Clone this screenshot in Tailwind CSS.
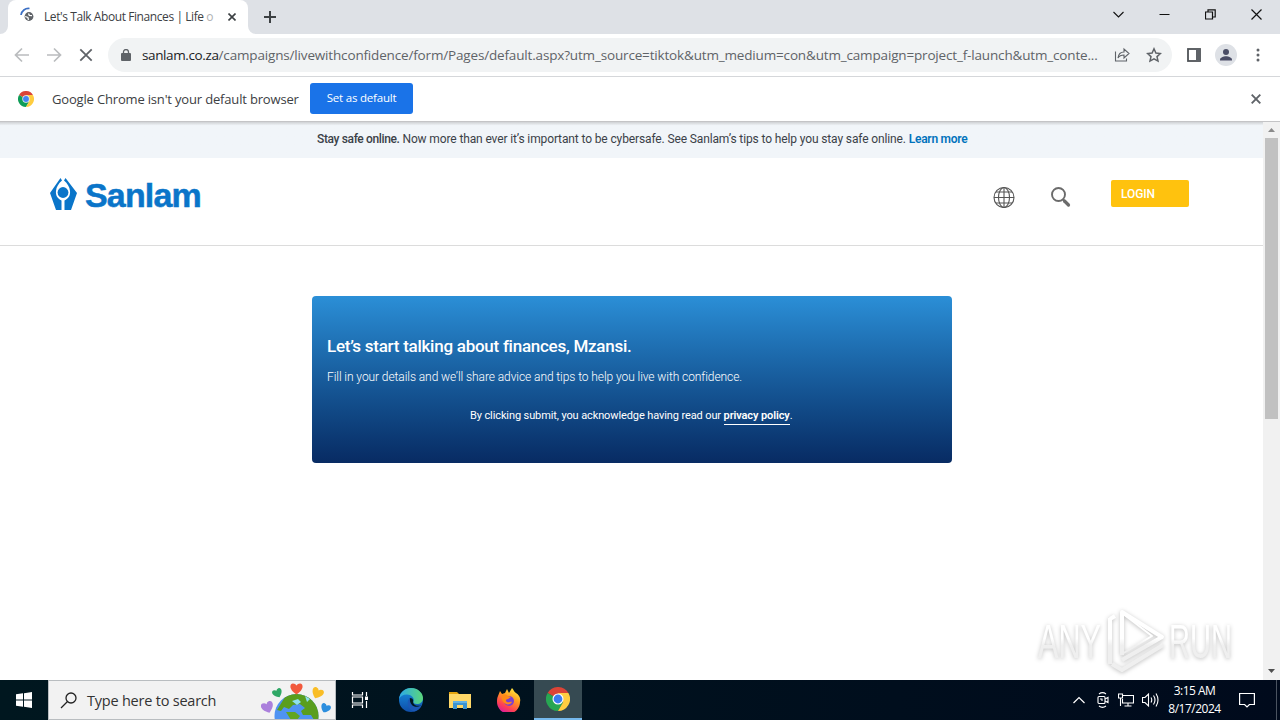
<!DOCTYPE html>
<html lang="en">
<head>
    <meta charset="UTF-8">
    <meta name="viewport" content="width=device-width, initial-scale=1.0">
    <title>Let's Talk About Finances | Life of Confidence</title>
    <script src="https://cdn.jsdelivr.net/npm/@tailwindcss/browser@4"></script>
</head>
<body class="w-[1280px] h-[720px] overflow-hidden flex flex-col bg-white font-['Open_Sans','Noto_Sans',sans-serif]">
    <!-- Tab strip -->
    <div class="h-[34px] shrink-0 bg-[#dee1e6] flex items-start pl-2">
        <div class="relative w-60 h-[34px] bg-white rounded-t-lg flex items-center pl-3 pr-2">
            <svg class="absolute -left-2 bottom-0 w-2 h-2" viewBox="0 0 8 8"><path d="M8 0v8H0a8 8 0 0 0 8-8z" fill="#fff"/></svg>
            <svg class="absolute -right-2 bottom-0 w-2 h-2" viewBox="0 0 8 8"><path d="M0 0v8h8a8 8 0 0 1-8-8z" fill="#fff"/></svg>
            <svg class="w-4 h-4 shrink-0 -mt-1" viewBox="0 0 16 16" fill="none">
                <path d="M1 8A7.500 7.500 0 0 1 9.500 1.500" stroke="#3b6fc4" stroke-width="1.700"/>
                <circle cx="9" cy="9.500" r="4.400" fill="#5f6368"/>
                <path d="M5.200 9.500l2.700 1 .6 2.300M8.500 6.500l.8 1.800 2.700.3" stroke="#fff" stroke-width="1.300"/>
            </svg>
            <div class="ml-2 w-[172px] whitespace-nowrap text-[12px] leading-4 text-[#3c4043] tracking-[-0.42px]">Let's Talk About Finances | Life <span class="text-[#b0b2b4]">o</span></div>
            <svg class="ml-3 w-2 h-2 shrink-0" viewBox="0 0 8 8"><path d="M.5.5l7 7M7.500.5l-7 7" stroke="#3c4043" stroke-width="1.600"/></svg>
        </div>
        <svg class="ml-4 mt-[11px] w-3 h-3" viewBox="0 0 12 12"><path d="M6 0v12M0 6h12" stroke="#3c4043" stroke-width="2"/></svg>
        <div class="ml-auto flex items-center h-7 text-[#111]">
            <svg class="w-[11px] h-[11px] mr-[35px]" viewBox="0 0 11 11" fill="none"><path d="M.5 3l5 5 5-5" stroke="currentColor" stroke-width="1.100"/></svg>
            <svg class="w-[11px] h-[11px] mr-[35px]" viewBox="0 0 11 11"><path d="M.5 5.500h10" stroke="currentColor"/></svg>
            <svg class="w-[11px] h-[11px] mr-[35px]" viewBox="0 0 11 11" fill="none"><path d="M.5 3h7v7h-7zM3 3V.8h7.200v7.200H7.500" stroke="currentColor" stroke-width="1.200"/></svg>
            <svg class="w-[11px] h-[11px] mr-[18px]" viewBox="0 0 11 11"><path d="M.5.5l10 10M10.500.5l-10 10" stroke="currentColor" stroke-width="1.200"/></svg>
        </div>
    </div>

    <!-- Toolbar -->
    <div class="h-[43px] shrink-0 bg-white border-b border-[#d5d7da] flex items-center pl-[14px]">
        <svg class="w-4 h-4" viewBox="0 0 16 16" fill="none"><path d="M15 8H2M8 1.500L1.500 8 8 14.500" stroke="#babcbe" stroke-width="1.700"/></svg>
        <svg class="ml-4 w-4 h-4" viewBox="0 0 16 16" fill="none"><path d="M1 8h13M8 1.500L14.500 8 8 14.500" stroke="#babcbe" stroke-width="1.700"/></svg>
        <svg class="ml-4 w-4 h-4" viewBox="0 0 16 16"><path d="M2.300 2.300l11.400 11.400M13.700 2.300L2.300 13.700" stroke="#5f6368" stroke-width="1.800"/></svg>
        <div class="ml-[14px] w-[1064px] h-[34px] rounded-full bg-[#f1f3f4] flex items-center pl-[13px]">
            <svg class="w-[10px] h-3 shrink-0" viewBox="0 0 10 12"><rect y="4" width="10" height="8" rx="1" fill="#5f6368"/><path d="M2.500 5V3a2.500 2.500 0 0 1 5 0v2" fill="none" stroke="#5f6368" stroke-width="1.300"/></svg>
            <div class="ml-[11px] w-[958px] whitespace-nowrap text-[13.5px] leading-5 text-[#5f6368] tracking-[-0.165px]"><span class="text-[#202124] tracking-[-0.38px]">sanlam.co.za</span>/campaigns/livewithconfidence/form/Pages/default.aspx?utm_source=tiktok&amp;utm_medium=con&amp;utm_campaign=project_f-launch&amp;utm_conte...</div>
            <svg class="ml-[14px] w-4 h-4 shrink-0" viewBox="0 0 16 16" fill="none" stroke="#5f6368" stroke-width="1.100"><path d="M1.500 4.500v9.500h11v-2.500"/><path d="M4 11c.5-4 2.500-6 6-6V2l5 4.500-5 4.500V8c-3 0-4.800 1-6 3z"/></svg>
            <svg class="ml-4 w-4 h-4 shrink-0" viewBox="0 0 16 16" fill="none" stroke="#5f6368" stroke-width="1.500"><path d="M8 1.800l1.900 4.200 4.500.5-3.400 3.100 1 4.500L8 11.800l-4 2.300 1-4.500L1.600 6.500 6.100 6z"/></svg>
        </div>
        <svg class="ml-[15px] w-[14px] h-[14px]" viewBox="0 0 14 14"><rect x="1" y="1" width="12" height="12" fill="none" stroke="#4f5357" stroke-width="1.800"/><path d="M9 1h4v12H9z" fill="#5f6368"/></svg>
        <svg class="ml-[14px] w-[22px] h-[22px]" viewBox="0 0 22 22"><circle cx="11" cy="11" r="11" fill="#dee1e6"/><circle cx="11" cy="8" r="3" fill="#4a4d66"/><path d="M5 16.500v-1c0-2 3.500-3.300 6-3.300s6 1.300 6 3.300v1z" fill="#4a4d66"/></svg>
        <svg class="ml-[19px] w-1 h-[14px]" viewBox="0 0 4 14" fill="#5f6368"><circle cx="2" cy="2" r="1.500"/><circle cx="2" cy="7" r="1.500"/><circle cx="2" cy="12" r="1.500"/></svg>
    </div>

    <!-- Default browser bar -->
    <div class="h-11 shrink-0 bg-white flex items-center pl-[18px] pr-[19px]">
        <svg class="w-4 h-4" viewBox="0 0 48 48">
            <path d="M24 24L3.200 12A24 24 0 0 1 44.800 12z" fill="#db4437"/>
            <path d="M24 24L3.200 12A24 24 0 0 0 24 48l10.400-18z" fill="#0f9d58"/>
            <path d="M24 12h20.800A24 24 0 0 1 24 48l10.400-18z" fill="#ffcd40"/>
            <circle cx="24" cy="24" r="11" fill="#f1f1f1"/><circle cx="24" cy="24" r="8.800" fill="#4285f4"/>
        </svg>
        <div class="ml-[18px] w-[258px] whitespace-nowrap text-[13px] leading-5 text-[#3c4043] tracking-[-0.17px]">Google Chrome isn't your default browser</div>
        <button class="w-[103px] h-[31px] -mt-0.5 rounded-[3px] bg-[#1a73e8] text-white text-[11.5px] tracking-[-0.2px]">Set as default</button>
        <svg class="ml-auto w-[10px] h-[10px]" viewBox="0 0 10 10"><path d="M.7.7l8.600 8.600M9.300.7L.7 9.300" stroke="#5f6368" stroke-width="1.900"/></svg>
    </div>

    <!-- Page -->
    <div class="h-[559px] shrink-0 flex border-t border-[#c4c4c6]">
        <div class="relative w-[1263px] font-[Roboto,sans-serif]">
            <div class="h-9 bg-linear-to-b from-[#cfd1d4] via-[#f1f5f9] via-10% to-[#f1f5f9] pl-[317px] pt-[9px] text-[12px] leading-4 text-[#3b4148] whitespace-nowrap tracking-[-0.125px]"><span class="font-medium tracking-[-0.36px]">Stay safe online.</span> Now more than ever it’s important to be cybersafe. See Sanlam’s tips to help you stay safe online. <a class="font-semibold text-[#0072bc] tracking-[-0.25px]">Learn more</a></div>
            <header class="h-[88px] border-b border-[#dcdcdc] flex items-start pl-[49px]">
                <div class="flex items-start mt-[20px]">
                    <svg class="w-7 h-8" viewBox="0 0 28 32">
                        <path d="M11.500 0L1 15l6 17h5.500v-9.500C8.500 20.500 6.500 17.500 7 13c.3-4 2.500-7.500 6-10.500zM16.500 0L28 15l-6 17h-6.500v-9.500c4-2 6-5 5.500-9.500-.3-4-2.500-7.500-6-10.500z" fill="#0a75c9"/>
                        <circle cx="14" cy="14.500" r="5.400" fill="#0a75c9"/>
                    </svg>
                    <div class="ml-[8px] text-[34px] leading-[34px] font-bold text-[#0a75c9] tracking-[-0.85px] font-['Liberation_Sans',sans-serif] [-webkit-text-stroke:0.5px_#0a75c9]">Sanlam</div>
                </div>
                <svg class="ml-auto mt-7 w-[22px] h-[22px]" viewBox="0 0 22 22" fill="none" stroke="#555" stroke-width="1.100"><circle cx="11" cy="11.500" r="10"/><ellipse cx="11" cy="11.500" rx="5.500" ry="10"/><path d="M11 1.500v20M1 11.500h20M3 6h16M3 17h16"/></svg>
                <svg class="ml-9 mt-7 w-5 h-[22px]" viewBox="0 0 20 22" fill="none" stroke="#6b6b6b"><circle cx="7.500" cy="8.500" r="6.500" stroke-width="1.900"/><path d="M12 13.500l2 2" stroke-width="2"/><path d="M13.500 15l4 4" stroke-width="3.200" stroke-linecap="round"/></svg>
                <button class="ml-10 mr-[74px] mt-[22px] w-[78px] h-[27px] rounded-[2px] bg-[#ffc20e] text-left pl-[10px] text-[12px] font-medium text-white tracking-[-0.1px]">LOGIN</button>
            </header>
            <section class="ml-[312px] mt-[50px] w-[640px] h-[167px] rounded-[4px] bg-linear-to-b from-[#2b8fd7] to-[#082b63] pl-[15px] pt-[38px] text-white whitespace-nowrap">
                <h1 class="text-[17px] leading-6 font-medium tracking-[-0.26px]"><span>Let’s start talking about finances, Mzansi.</span></h1>
                <p class="mt-[10px] text-[12px] leading-[18px] font-light tracking-[-0.08px]"><span>Fill in your details and we’ll share advice and tips to help you live with confidence.</span></p>
                <p class="mt-[22px] pl-[143px] text-[11px] leading-[16px] tracking-[-0.11px]"><span>By clicking submit, you acknowledge having read our <a class="font-semibold border-b border-white pb-0.5">privacy policy</a>.</span></p>
            </section>
            <!-- Watermark -->
            <svg class="absolute left-[1030px] top-[482px] w-[210px] h-[72px] overflow-visible drop-shadow-[0_1px_2px_rgba(0,0,0,0.25)]" viewBox="0 0 210 72" fill="none">
                <defs><linearGradient id="mark" gradientUnits="userSpaceOnUse" x1="0" x2="0" y1="20" y2="56"><stop offset=".4" stop-color="#fff"/><stop offset=".6" stop-color="#efefef"/></linearGradient></defs>
                <g fill="url(#mark)" font-family="Liberation Sans" font-size="49">
                    <text x="8" y="54" textLength="63" lengthAdjust="spacingAndGlyphs">ANY</text>
                    <text x="139" y="54" textLength="63" lengthAdjust="spacingAndGlyphs">RUN</text>
                </g>
                <g stroke="url(#mark)" stroke-width="4" stroke-linejoin="round">
                    <path d="M80 14v46M92 51V8l40 25-40 23"/><path d="M80 15l5-3M82 60l10 6 41-25"/>
                    <path d="M92 9v41l30-18z" stroke-width="2"/>
                </g>
            </svg>
        </div>
        <div class="w-[17px] bg-[#f1f1f1] flex flex-col items-center">
            <svg class="mt-1 w-[7px] h-2 shrink-0" viewBox="0 0 7 8"><path d="M0 6l3.500-4L7 6z" fill="#8a8a8a"/></svg>
            <div class="mt-1 w-[13px] h-[281px] bg-[#c1c1c1]"></div>
            <svg class="mt-auto mb-[5px] w-[7px] h-2" viewBox="0 0 7 8"><path d="M0 2l3.500 4L7 2z" fill="#505050"/></svg>
        </div>
    </div>

    <!-- Taskbar -->
    <div class="h-10 shrink-0 bg-linear-to-r from-[#00171f] to-[#000a1c] flex items-center text-white">
        <div class="w-12 flex justify-center">
            <svg class="w-4 h-4" viewBox="0 0 16 16" fill="#fff"><path d="M0 2.300L7 1.300v6.200H0zM8 1.200L16 0v7.500H8zM0 8.500h7v6.200l-7-1zM8 8.500h8V16l-8-1.200z"/></svg>
        </div>
        <div class="w-72 h-10 bg-[#f2f2f2] border border-[#b9bdc0] flex items-center pl-[11px]">
            <svg class="w-[17px] h-[17px]" viewBox="0 0 17 17" fill="none" stroke="#222" stroke-width="1.300"><circle cx="11" cy="6" r="5"/><path d="M7.500 9.500L1 16"/></svg>
            <div class="ml-[10px] pt-0.5 text-[14.5px] leading-5 text-[#333] whitespace-nowrap tracking-[-0.22px]"><span>Type here to search</span></div>
            <svg class="ml-auto mr-[4px] w-[70px] h-[38px]" viewBox="0 0 70 38">
                <defs>
                    <clipPath id="globe"><circle cx="35.500" cy="35" r="22"/></clipPath>
                    <path id="heart" d="M0 6C-8 1-7-5-3.500-5Q-1-5 0-3Q1-5 3.500-5C7-5 8 1 0 6z"/>
                </defs>
                <circle cx="35.500" cy="35" r="22" fill="#4f93f2"/>
                <g clip-path="url(#globe)">
                    <path d="M24 16l8-4 8 0 10 4 10 13v10H53l-3-5-8 0-2-4 4-3-5-4-7 1-4 4-5-2-3 4-4-1z" fill="#5a9e1d"/>
                    <path d="M31 20l6-2 3 3-4 3zM44 15l5 3-3 3z" fill="#8ee0ee"/>
                    <path d="M25 31l9 0 5 4-3 4H30z" fill="#62a522"/>
                </g>
                <use href="#heart" transform="translate(35.500 7.500)" fill="#f2593c"/>
                <use href="#heart" transform="translate(16.500 12) rotate(-25) scale(.8)" fill="#2fa866"/>
                <use href="#heart" transform="translate(56.500 12) rotate(25) scale(.95)" fill="#f9bd25"/>
                <use href="#heart" transform="translate(6.500 26) rotate(-20)" fill="#ab80dc"/>
                <use href="#heart" transform="translate(64.500 27) rotate(25) scale(.8)" fill="#2c8ede"/>
            </svg>
        </div>
        <div class="w-12 flex justify-center">
            <svg class="w-[18px] h-4" viewBox="0 0 18 16" fill="none" stroke="#fff" stroke-width="1.200"><path d="M1.500 0v3h10V0M1.500 5h10v6h-10zM1.500 16v-3h10v3M15.500 0v4M15.500 9v7"/><path d="M14 4.500h3v3.500h-3z" fill="#fff" stroke="none"/></svg>
        </div>
        <div class="w-[54px] flex justify-center">
            <svg class="w-6 h-6" viewBox="0 0 24 24">
                <defs>
                    <linearGradient id="edgeTop" x1="0" x2="1"><stop stop-color="#2ba9e8"/><stop offset="1" stop-color="#5bd67a"/></linearGradient>
                    <linearGradient id="edgeLow" x1="0" x2="0" y1="0" y2="1"><stop stop-color="#1790df"/><stop offset="1" stop-color="#0f4da8"/></linearGradient>
                </defs>
                <circle cx="12" cy="12" r="12" fill="url(#edgeLow)"/>
                <path d="M0 11C1 4 6 0 12 0c7 0 12 5 12 10 0 4-3 6-6 6-3 0-4-1-3.500-2.500C16 10 12 6.500 8 6.500c-4 0-7 2-8 4.500z" fill="url(#edgeTop)"/>
                <path d="M11 10c-2 3-1 8 5 9 3 .5 5-.5 6.500-1.500-4 1-8 0-8.500-3.500.5-1 .5-4-3-4z" fill="#00171f"/>
                <path d="M11 10c-4 3-3 11 4 13.500C18 23 21 21 22.500 17.500 16 21 10 17 11 10z" fill="#1b58b5"/>
            </svg>
        </div>
        <div class="w-11 flex justify-center">
            <svg class="w-[22px] h-5" viewBox="0 0 22 20"><path d="M0 2h8l2 2h12v4H0z" fill="#e5a50f"/><path d="M0 4h22v14H0z" fill="#ffd868"/><path d="M4 19v-8h14v8h-4v-4H8v4z" fill="#3c94d2"/><path d="M4 11h14v2H4z" fill="#62b2e6"/></svg>
        </div>
        <div class="w-[52px] pl-0.5 flex justify-center">
            <svg class="w-6 h-6" viewBox="0 0 24 24">
                <defs><linearGradient id="fox" x1=".8" y1="0" x2=".3" y2="1"><stop stop-color="#fff044"/><stop offset=".4" stop-color="#ff9a1f"/><stop offset=".75" stop-color="#ff4053"/><stop offset="1" stop-color="#d91aa0"/></linearGradient></defs>
                <path d="M1 8l2-5 2 3 3-1 2-4 2 4 3-5c2 2 2 4 4 5 3 2 5 5 4 9a11.500 11.500 0 0 1-23 0c0-2 0-4 1-6z" fill="url(#fox)"/>
                <circle cx="12" cy="13" r="5" fill="#7a3fd2"/><path d="M5 7c3-1 5 0 6 1l3 1-3 2c-2 0-3 2-1 3 2 1 4-1 5 0-1 2-4 3-6 2-4-2-5-6-4-9z" fill="#ff8a16"/>
            </svg>
        </div>
        <div class="w-12 h-10 bg-[#364a52] border-b-2 border-[#76b9ed] flex items-center justify-center">
            <svg class="w-6 h-6" viewBox="0 0 48 48">
                <path d="M24 24L3.200 12A24 24 0 0 1 44.800 12z" fill="#db4437"/>
                <path d="M24 24L3.200 12A24 24 0 0 0 24 48l10.400-18z" fill="#27a652"/>
                <path d="M24 12h20.800A24 24 0 0 1 24 48l10.400-18z" fill="#ffcd40"/>
                <circle cx="24" cy="24" r="11" fill="#fff"/><circle cx="24" cy="24" r="8.800" fill="#3b7cf0"/>
            </svg>
        </div>
        <div class="ml-auto flex items-center">
            <svg class="w-3 h-3" viewBox="0 0 12 12" fill="none" stroke="#fff" stroke-width="1.200"><path d="M.5 9L6 3.500 11.500 9"/></svg>
            <svg class="ml-3 w-3 h-4" viewBox="0 0 12 16" fill="none" stroke="#fff" stroke-width="1.100"><rect x="1" y="4.500" width="7" height="7" rx="1"/><path d="M8 7l3-1.500v5L8 9M2 2c2-1.500 5-1.500 7 0M2 14c2 1.500 5 1.500 7 0M3 7h2v2"/></svg>
            <svg class="ml-[9px] w-4 h-4" viewBox="0 0 16 16" fill="none" stroke="#fff" stroke-width="1.100"><path d="M5 3.500h10.500v7.500H4.500V7M10 11v3M6.500 14h7M.5 2h4v4h-4zM2.500 6v8"/></svg>
            <svg class="ml-2 w-[17px] h-4" viewBox="0 0 17 16" fill="none" stroke="#fff" stroke-width="1.100"><path d="M.5 5.500h2.500L6.500 2v12L3 10.500H.5zM9 5.500q1.500 2.500 0 5M11.500 3.500q3 4.500 0 9M14 1.500q4 6.500 0 13"/></svg>
            <div class="w-[71px] text-center text-[12px] leading-[18px] tracking-[-0.5px] whitespace-nowrap"><div>3:15 AM</div><div>8/17/2024</div></div>
            <svg class="ml-[9px] mr-px w-4 h-4" viewBox="0 0 16 16" fill="none" stroke="#fff" stroke-width="1.200"><path d="M.6 1.500h14.800v11h-5L8 15l-2.400-2.500h-5z"/></svg>
            <div class="ml-5 w-[4px] h-10 border-l border-[#4a5360]"></div>
        </div>
    </div>
</body>
</html>
